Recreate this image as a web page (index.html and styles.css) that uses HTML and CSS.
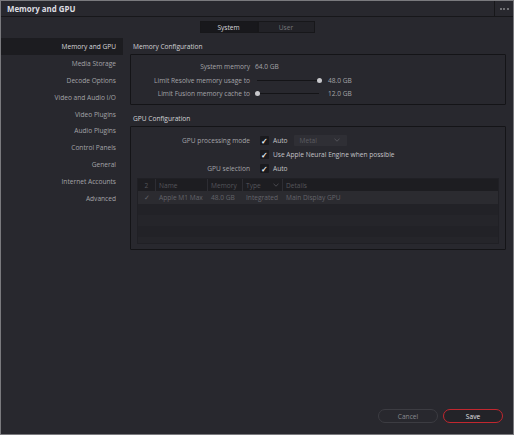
FILE: index.html
```html
<!DOCTYPE html>
<html lang="en">
<head>
    <meta charset="UTF-8">
    <title>Memory and GPU</title>
    <link rel="stylesheet" href="styles.css">
</head>
<body>
    <div class="window">
        <div class="titlebar">
            <span class="title">Memory and GPU</span>
            <span class="more"><i></i><i></i><i></i></span>
        </div>

        <div class="tabs">
            <div class="tab active">System</div>
            <div class="tab">User</div>
        </div>

        <div class="main">
            <div class="sidebar">
                <div class="nav-item selected">Memory and GPU</div>
                <div class="nav-item">Media Storage</div>
                <div class="nav-item">Decode Options</div>
                <div class="nav-item">Video and Audio I/O</div>
                <div class="nav-item">Video Plugins</div>
                <div class="nav-item">Audio Plugins</div>
                <div class="nav-item">Control Panels</div>
                <div class="nav-item">General</div>
                <div class="nav-item">Internet Accounts</div>
                <div class="nav-item">Advanced</div>
            </div>

            <div class="content">
                <div class="section-title">Memory Configuration</div>
                <div class="box memory-box">
                    <div class="row">
                        <span class="label">System memory</span>
                        <span class="value">64.0 GB</span>
                    </div>
                    <div class="row">
                        <span class="label">Limit Resolve memory usage to</span>
                        <div class="slider"><div class="knob" style="left: 100%"></div></div>
                        <span class="value">48.0 GB</span>
                    </div>
                    <div class="row">
                        <span class="label">Limit Fusion memory cache to</span>
                        <div class="slider"><div class="knob" style="left: 0%"></div></div>
                        <span class="value">12.0 GB</span>
                    </div>
                </div>

                <div class="section-title">GPU Configuration</div>
                <div class="box gpu-box">
                    <div class="row">
                        <span class="label">GPU processing mode</span>
                        <span class="check">&#10003;</span>
                        <span class="opt">Auto</span>
                        <div class="select">Metal
                            <svg class="chev" width="6" height="4" viewBox="0 0 6 4"><path d="M0.5 0.8 L3 3.2 L5.5 0.8" fill="none" stroke="#5c5c62" stroke-width="0.8"/></svg>
                        </div>
                    </div>
                    <div class="row">
                        <span class="label"></span>
                        <span class="check">&#10003;</span>
                        <span class="opt">Use Apple Neural Engine when possible</span>
                    </div>
                    <div class="row">
                        <span class="label">GPU selection</span>
                        <span class="check">&#10003;</span>
                        <span class="opt">Auto</span>
                    </div>

                    <div class="table">
                        <div class="thead">
                            <div class="c c-sel">2</div>
                            <div class="c c-name">Name</div>
                            <div class="c c-mem">Memory</div>
                            <div class="c c-type">Type
                                <svg class="chev" width="6" height="4" viewBox="0 0 6 4"><path d="M0.5 0.8 L3 3.2 L5.5 0.8" fill="none" stroke="#55555b" stroke-width="0.8"/></svg>
                            </div>
                            <div class="c c-det">Details</div>
                        </div>
                        <div class="tr">
                            <div class="c c-sel">&#10003;</div>
                            <div class="c c-name">Apple M1 Max</div>
                            <div class="c c-mem">48.0 GB</div>
                            <div class="c c-type">Integrated</div>
                            <div class="c c-det">Main Display GPU</div>
                        </div>
                        <div class="tr"></div>
                        <div class="tr"></div>
                        <div class="tr"></div>
                        <div class="tr"></div>
                    </div>
                </div>
            </div>
        </div>

        <div class="footer">
            <button class="btn">Cancel</button>
            <button class="btn save">Save</button>
        </div>
    </div>
</body>
</html>
```

FILE: styles.css
```css
* {
    margin: 0;
    padding: 0;
    box-sizing: border-box;
    font-family: "Open Sans", Arial, sans-serif;
}

body {
    background: #28282e;
}

.window {
    width: 514px;
    height: 435px;
    border: 1px solid #7a7a7e;
    background: #28282e;
    display: flex;
    flex-direction: column;
    color: #a4a4a8;
    font-size: 6.6px;
}

.titlebar {
    height: 16px;
    display: flex;
    align-items: center;
    justify-content: space-between;
    border-bottom: 1px solid #17171a;
    padding-left: 6px;
}

.title {
    color: #dedee2;
    font-weight: bold;
    font-size: 7.9px;
}

.more {
    width: 19px;
    height: 100%;
    border-left: 1px solid #17171a;
    display: flex;
    align-items: center;
    justify-content: center;
    gap: 1.5px;
}

.more i {
    width: 2px;
    height: 2px;
    border-radius: 50%;
    background: #8a8a8e;
}

.tabs {
    display: flex;
    justify-content: center;
    margin-top: 4px;
}

.tab {
    width: 57px;
    height: 12px;
    background: #222227;
    border: 1px solid #17171a;
    color: #76767a;
    display: flex;
    align-items: center;
    justify-content: center;
}

.tab.active {
    background: #18181c;
    color: #d8d8dc;
    width: 58px;
}

.main {
    display: flex;
    margin-top: 5px;
    flex: 1;
}

.sidebar {
    width: 122px;
}

.nav-item {
    height: 16.9px;
    display: flex;
    align-items: center;
    justify-content: flex-end;
    padding-right: 7px;
    color: #a4a4a8;
}

.nav-item.selected {
    background: #1c1c20;
    color: #d8d8dc;
}

.content {
    margin-left: 7px;
    width: 376px;
}

.section-title {
    color: #d4d4d8;
    height: 16px;
    display: flex;
    align-items: center;
    padding-left: 3px;
}

.box {
    border: 1px solid #141417;
    border-radius: 1px;
}

.memory-box {
    height: 51px;
    padding-top: 5px;
    margin-bottom: 5px;
}

.gpu-box {
    height: 124px;
    padding-top: 6px;
}

.row {
    display: flex;
    align-items: center;
    height: 13.5px;
}

.gpu-box .row {
    height: 14px;
}

.label {
    width: 119px;
    text-align: right;
    margin-right: 5px;
    flex-shrink: 0;
}

.value {
    color: #a4a4a8;
}

.slider {
    position: relative;
    width: 62px;
    height: 1px;
    background: #141417;
    margin-right: 9px;
    margin-left: 2px;
}

.knob {
    position: absolute;
    top: -2px;
    width: 5px;
    height: 5px;
    margin-left: -2.5px;
    border-radius: 50%;
    background: #c8c8cc;
}

.check {
    width: 9px;
    height: 9px;
    background: #1a1a1e;
    border-radius: 1px;
    color: #f0f0f2;
    font-size: 8px;
    font-weight: bold;
    display: flex;
    align-items: center;
    justify-content: center;
    margin-left: 5px;
    margin-right: 4px;
}

.opt {
    color: #c4c4c8;
}

.select {
    margin-left: 6px;
    width: 53px;
    height: 11px;
    background: #2f2f35;
    color: #5c5c62;
    padding-left: 6px;
    display: flex;
    align-items: center;
    border-radius: 1px;
}

.select .chev {
    margin-left: auto;
    margin-right: 7px;
}

.table {
    margin: 3px 6px 0;
    height: 66px;
    border: 1px solid #202025;
    background: #25252a;
}

.thead, .tr {
    display: flex;
    align-items: center;
}

.thead {
    height: 12px;
    background: #1d1d21;
    color: #55555b;
}

.tr {
    height: 11px;
    color: #64646a;
}

.tr:nth-child(2) {
    height: 13px;
    background: #2b2b30;
}

.tr:nth-child(odd) {
    background: #222227;
}

.c {
    padding-left: 3px;
    white-space: nowrap;
    display: flex;
    align-items: center;
}

.thead .c {
    height: 100%;
    border-right: 1px solid #2d2d33;
}

.thead .c-det {
    border-right: none;
}

.c-sel {
    width: 18px;
    justify-content: center;
    padding-left: 0;
}

.c-name { width: 52px; }
.c-mem { width: 35px; }
.c-type { width: 40px; }
.c-det { flex: 1; }

.c-type .chev {
    margin-left: auto;
    margin-right: 3px;
}

.footer {
    display: flex;
    justify-content: flex-end;
    gap: 5px;
    padding: 0 10px 11px 0;
}

.btn {
    width: 60px;
    height: 14px;
    border-radius: 7px;
    border: 1px solid #3c3c42;
    background: #28282e;
    color: #8a8a8e;
    font-size: 6.6px;
}

.btn.save {
    border: 1px solid #c2272f;
    background: #232328;
    color: #e4e4e8;
}
```
